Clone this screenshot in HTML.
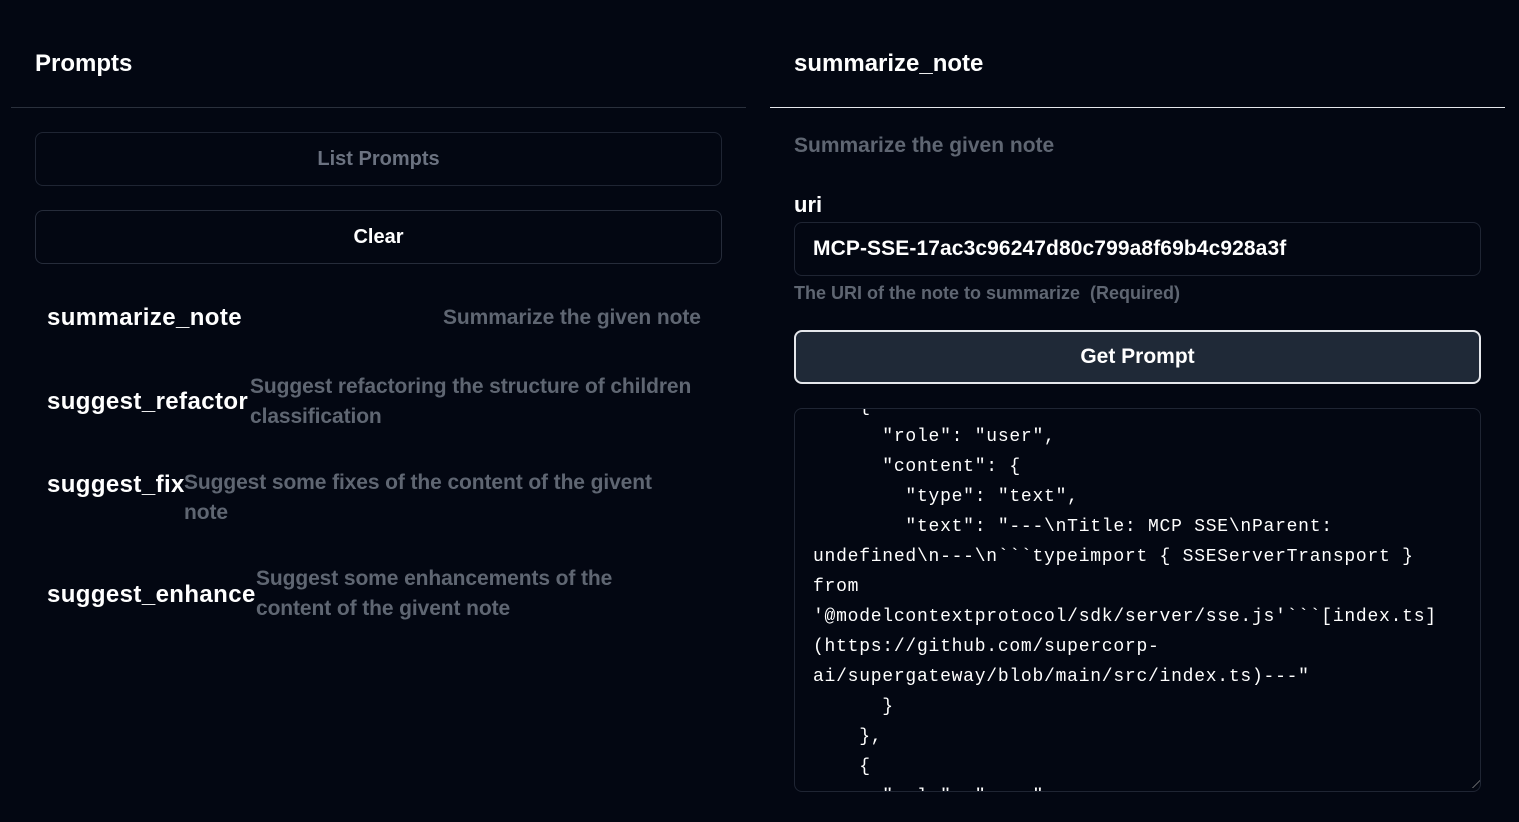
<!DOCTYPE html>
<html><head><meta charset="utf-8"><style>
*{box-sizing:border-box;margin:0;padding:0}
body{width:1519px;height:822px;background:#030712;color:#fff;font-family:"Liberation Sans",sans-serif;font-weight:bold;position:relative;overflow:hidden}
.a{position:absolute;white-space:nowrap}
.g{color:#5f6672}
.btn{position:absolute;border:1px solid #1f2533;border-radius:8px;display:flex;align-items:center;justify-content:center;font-size:20px}
.hr{position:absolute;height:1px}
.name{font-size:24px;letter-spacing:0.4px}
.desc{font-size:21px;line-height:30px;white-space:normal;letter-spacing:-0.1px}
pre{font-family:"Liberation Mono",monospace;font-weight:normal;font-size:18px;letter-spacing:0.75px;line-height:30px;color:#fff}
</style></head><body>
<div class="a" style="left:35px;top:50px;font-size:24px">Prompts</div>
<div class="hr" style="left:11px;top:107px;width:735px;background:#2a303c"></div>
<div class="btn" style="left:35px;top:132px;width:687px;height:54px;color:#6b7280">List Prompts</div>
<div class="btn" style="left:35px;top:210px;width:687px;height:54px;border-color:#262c3a">Clear</div>

<div class="a name" style="left:47px;top:304px">summarize_note</div>
<div class="a g desc" style="left:443px;top:303px">Summarize the given note</div>
<div class="a name" style="left:47px;top:388px">suggest_refactor</div>
<div class="a g desc" style="left:250px;top:372px;width:470px">Suggest refactoring the structure of children classification</div>
<div class="a name" style="left:47px;top:471px">suggest_fix</div>
<div class="a g desc" style="left:184px;top:468px;width:500px">Suggest some fixes of the content of the givent note</div>
<div class="a name" style="left:47px;top:581px">suggest_enhance</div>
<div class="a g desc" style="left:256px;top:564px;width:390px">Suggest some enhancements of the content of the givent note</div>

<div class="a" style="left:794px;top:50px;font-size:24px">summarize_note</div>
<div class="hr" style="left:770px;top:107px;width:735px;background:#e5e7eb"></div>
<div class="a g" style="left:794px;top:134px;font-size:21px">Summarize the given note</div>
<div class="a" style="left:794px;top:192px;font-size:22px">uri</div>
<div class="a" style="left:794px;top:222px;width:687px;height:54px;border:1px solid #1f2533;border-radius:8px;padding:14px 18px;font-size:21px;letter-spacing:0.1px">MCP-SSE-17ac3c96247d80c799a8f69b4c928a3f</div>
<div class="a g" style="left:794px;top:283px;font-size:18px">The URI of the note to summarize &nbsp;(Required)</div>
<div class="btn" style="left:794px;top:330px;width:687px;height:54px;background:#1f2937;border:2px solid #e5e7eb;color:#fff;font-size:21px">Get Prompt</div>
<div class="a" style="left:794px;top:408px;width:687px;height:384px;border:1px solid #1f2533;border-radius:8px;overflow:hidden">
<pre style="position:absolute;left:18px;top:-17px">    {
      "role": "user",
      "content": {
        "type": "text",
        "text": "---\nTitle: MCP SSE\nParent:
undefined\n---\n&#96;&#96;&#96;typeimport { SSEServerTransport }
from
'@modelcontextprotocol/sdk/server/sse.js'&#96;&#96;&#96;[index.ts]
(https://github.com/supercorp-
ai/supergateway/blob/main/src/index.ts)---"
      }
    },
    {
      "role": "user",</pre>
<div style="position:absolute;right:3px;bottom:3px;width:8px;height:8px;border-right:1px solid #888;transform:skewX(-45deg)"></div>
</div>
</body></html>
